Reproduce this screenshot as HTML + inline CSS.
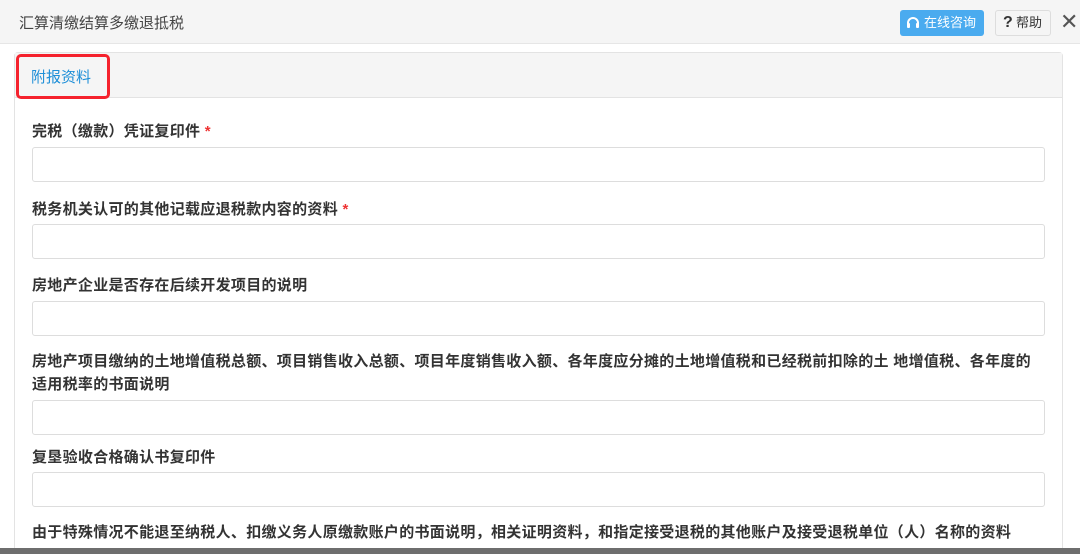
<!DOCTYPE html><html><head><meta charset="utf-8"><style>
*{margin:0;padding:0;box-sizing:border-box}
html,body{width:1080px;height:554px;overflow:hidden}
body{background:#fff;font-family:"Liberation Sans","Noto Sans CJK SC",sans-serif;position:relative}
.hdr{position:absolute;left:0;top:0;width:1080px;height:44px;background:#f5f5f5;border-bottom:1px solid #e6e6e6}
.title{position:absolute;left:19px;top:12px;font-size:15px;color:#444}
.btn1{position:absolute;left:900px;top:10px;width:84px;height:26px;background:#4aabef;border-radius:3px;color:#fff;font-size:13px;line-height:26px;padding-left:24px}
.btn2{position:absolute;left:995px;top:10px;width:56px;height:26px;background:#f5f5f5;border:1px solid #ddd;border-radius:3px;font-size:13px;line-height:24px;color:#333;padding-left:20px}
.btn2 b{position:absolute;left:7px;top:0;font-size:16px;color:#333}
.x{position:absolute;left:1060px;top:9px;font-size:22px;color:#555}
.panel{position:absolute;left:14px;top:52px;width:1049px;height:500px;border:1px solid #e3e3e3;border-radius:4px}
.ph{height:45px;background:#f5f5f5;border-bottom:1px solid #e3e3e3}
.red{position:absolute;left:16px;top:54px;width:94px;height:45px;border:3px solid #f5222d;border-radius:5px}
.rt{position:absolute;left:31px;top:66px;font-size:15px;color:#1e8fd8}
.lab{position:absolute;left:32px;font-size:15px;letter-spacing:0.3px;color:#333;line-height:23px;font-weight:bold}
.lab i{color:#e33;font-style:normal}
.in{position:absolute;left:32px;width:1013px;height:35px;border:1px solid #ddd;border-radius:3px;background:#fff}
.bot{position:absolute;left:0;top:548px;width:1080px;height:6px;background:#6e6e6e}
</style></head><body>
<div class="hdr"><div class="title">汇算清缴结算多缴退抵税</div>
<div class="btn1"><svg style="position:absolute;left:5px;top:5px" width="16" height="16" viewBox="0 0 16 16"><path d="M3 10V8a5 5 0 0 1 10 0v2" fill="none" stroke="#fff" stroke-width="2"/><rect x="2" y="8" width="3" height="5" rx="1" fill="#fff"/><rect x="11" y="8" width="3" height="5" rx="1" fill="#fff"/></svg>在线咨询</div>
<div class="btn2"><b>?</b>帮助</div><div class="x">✕</div></div>
<div class="panel"><div class="ph"></div></div>
<div class="red"></div><div class="rt">附报资料</div>
<div class="lab" style="top:120px">完税（缴款）凭证复印件 <i>*</i></div>
<div class="in" style="top:147px"></div>
<div class="lab" style="top:198px">税务机关认可的其他记载应退税款内容的资料 <i>*</i></div>
<div class="in" style="top:224px"></div>
<div class="lab" style="top:274px">房地产企业是否存在后续开发项目的说明</div>
<div class="lab" style="top:350px">房地产项目缴纳的土地增值税总额、项目销售收入总额、项目年度销售收入额、各年度应分摊的土地增值税和已经税前扣除的土 地增值税、各年度的</div>
<div class="lab" style="top:373px">适用税率的书面说明</div>
<div class="in" style="top:301px"></div>
<div class="in" style="top:400px"></div>
<div class="lab" style="top:446px">复垦验收合格确认书复印件</div>
<div class="in" style="top:472px"></div>
<div class="lab" style="top:521px;white-space:nowrap">由于特殊情况不能退至纳税人、扣缴义务人原缴款账户的书面说明，相关证明资料，和指定接受退税的其他账户及接受退税单位（人）名称的资料</div>
<div class="bot"></div>
</body></html>
